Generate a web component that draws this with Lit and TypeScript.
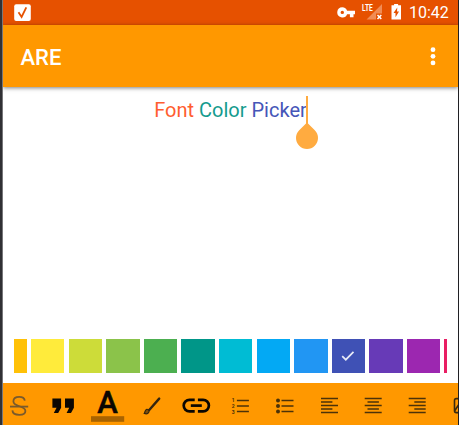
import { LitElement, html, svg, css } from "lit";
import { customElement, state } from "lit/decorators.js";

const COLORS = [
  "#ffc107", "#ffeb3b", "#cddc39", "#8bc34a", "#4caf50", "#009688",
  "#00bcd4", "#03a9f4", "#2196f3", "#3f51b5", "#673ab7", "#9c27b0", "#e91e63",
];

const alignRows = (starts: number[]) =>
  [15.5, 19, 22.5, 26, 29.5].map((y, i) =>
    svg`<path d=${`M${starts[i]} ${y}h${i % 2 ? 11.4 : 17}`} stroke="#4b3209" stroke-width="1.5"/>`);

const TOOLS: Array<[string, unknown]> = [
  ["Strikethrough", svg`<g fill="none" stroke="#7a5a2c" stroke-width="1.8">
    <path d="M27.8 17.6C27.4 15 25.4 13.9 22.2 13.9C18.7 13.9 16.4 15.6 16.4 18.3C16.4 21 18.4 22 21.8 23C26 24.2 28.4 25.2 28.4 28C28.4 30.700 25.8 31.800 22.300 31.800C18.200 31.800 15.600 30.400 15.400 27.400"/>
    <path d="M13 23.600h18.200"/></g>`],
  ["Quote", svg`<path d="M12.800 30h4.400l2.900-5.200V15.400H11.400v9.400h4.200zM25.600 30h4.400l2.900-5.200V15.400H24v9.400h4.200z" fill="#0b0702"/>`],
  ["Font color", svg`<text x="22.600" y="29.800" class="letter">A</text><rect x="6" y="33.200" width="33.200" height="5.600" fill="#a86300"/>`],
  ["Background brush", svg`<path d="M19 27.200L29.200 15.600" stroke="#33250f" stroke-width="2.400" stroke-linecap="round"/>
    <path d="M14.300 30.400C15 29.400 14.600 27.900 16.200 26.600C17.500 25.600 19.700 27.200 18.900 28.900C18 30.700 15.800 31 14.300 30.400Z" fill="#80500a" stroke="#33250f" stroke-width="1.200"/>`],
  ["Link", svg`<g fill="none" stroke="#0b0702" stroke-width="2.700"><path d="M20.700 16.800H15.500a5.800 5.800 0 0 0 0 11.600H20.700M23.900 16.800H29.100a5.800 5.800 0 0 1 0 11.600H23.900"/><path d="M16.800 22.600h11" stroke-width="2.700"/></g>`],
  ["Numbered list", svg`<path d="M18.900 17.500h12M18.900 23h12M18.900 28.500h12" stroke="#4b3209" stroke-width="1.500"/>
    <g class="digits"><text x="13.800" y="18.800">1</text><text x="13.800" y="25">2</text><text x="13.800" y="31.200">3</text></g>`],
  ["Bulleted list", svg`<path d="M18.500 17.500h12M18.500 23h12M18.500 28.500h12" stroke="#4b3209" stroke-width="1.500"/>
    <g fill="#4b3209"><circle cx="15" cy="17.500" r="2"/><circle cx="15" cy="23" r="2"/><circle cx="15" cy="28.500" r="2"/></g>`],
  ["Align left", alignRows([14, 14, 14, 14, 14])],
  ["Align center", alignRows([13.7, 16.5, 13.7, 16.5, 13.7])],
  ["Align right", alignRows([13.7, 19.3, 13.7, 19.3, 13.7])],
  ["Image", svg`<g fill="none" stroke="#3b2a0e" stroke-width="1.600"><rect x="14.500" y="15.600" width="18" height="14" rx="1.800"/><path d="M14.500 28l4-6 4 5 4-3 5 5"/></g>`],
];

@customElement("app-root")
export class AppRoot extends LitElement {
  @state() private selected = 9;

  static styles = css`
    :host {
      display: flex;
      flex-direction: column;
      box-sizing: border-box;
      width: 459px;
      height: 425px;
      overflow: hidden;
      border-left: 2px solid #303034;
      border-right: 1px solid #202024;
      background: #fff;
      font-family: Roboto, "Liberation Sans", sans-serif;
    }
    .screen {
      display: flex;
      flex-direction: column;
      flex: 1;
      min-height: 0;
      border-left: 1px solid #77777a;
      overflow: hidden;
    }
    .status {
      display: flex;
      align-items: center;
      flex: none;
      height: 25px;
      background: #e65100;
      color: #fff;
    }
    .status svg { display: block; flex: none; }
    .check { margin-left: 11px; }
    .spring { flex: 1; }
    .clock { width: 40px; margin: 1px 9px 0 8px; font-size: 16px; line-height: 24px; white-space: nowrap; }
    .appbar {
      display: flex;
      align-items: center;
      justify-content: space-between;
      flex: none;
      height: 62px;
      box-sizing: border-box;
      padding: 2px 17px 0 17.500px;
      background: #ff9800;
      box-shadow: 0 1px 4px rgba(0, 0, 0, 0.5);
      z-index: 1;
    }
    .title { color: #fff; font-size: 22px; font-weight: 500; }
    .editor { flex: 1; display: flex; justify-content: center; padding-top: 9px; }
    .line { position: relative; height: 28px; font-size: 20px; line-height: 28px; white-space: pre; }
    .red { color: #ff5d2f; }
    .teal { color: #159b8e; }
    .indigo { color: #4656b8; }
    .caret { position: absolute; right: -1px; top: 0; width: 2px; height: 28px; background: #ffab40; }
    .handle { position: absolute; right: -11px; top: 26px; }
    .palette {
      display: flex;
      gap: 4.200px;
      flex: none;
      height: 33.500px;
      width: 433.500px;
      margin: 0 0 10.500px 10.500px;
      overflow: hidden;
    }
    .swatch {
      display: grid;
      place-items: center;
      flex: none;
      width: 33.400px;
      height: 33.500px;
      padding: 0;
      border: 0;
    }
    .swatch:first-child { width: 13.400px; }
    .tools { display: flex; flex: none; height: 42px; background: #ff9800; }
    .tool { flex: none; width: 44.280px; height: 42px; padding: 0; border: 0; background: none; }
    .tool:first-child { margin-left: -6.100px; }
    .tool svg { display: block; }
    .letter { font: 500 31px Roboto, sans-serif; text-anchor: middle; fill: #0b0702; stroke: #0b0702; stroke-width: 0.500px; }
    .digits { font: 700 5px Roboto, sans-serif; fill: #4b3209; }
  `;

  render() {
    return html`
      <div class="screen">
        <div class="status">
          <svg class="check" width="18" height="18" viewBox="0 0 18 18">
            <rect x="0.200" y="0.200" width="16.600" height="16.800" rx="2" fill="#fff"/>
            <path d="M4.500 8.300L7.600 13L12.300 3.300" fill="none" stroke="#e65100" stroke-width="1.800"/>
          </svg>
          <span class="spring"></span>
          <svg width="64" height="25" viewBox="337 0 64 25">
            <path fill="#fff" fill-rule="evenodd" d="M342.300 7.200a5.100 5.100 0 0 1 4.800 3.500H355v3.500h-1.500v3.100h-3.600v-3.100h-2.800a5.100 5.100 0 1 1-4.800-7zM342.300 10.700a1.700 1.700 0 1 0 0 3.400a1.700 1.700 0 0 0 0-3.400z"/>
            <text x="362" y="11" font-size="9" font-weight="700" textLength="10.800" lengthAdjust="spacingAndGlyphs" fill="#fff">LTE</text>
            <path d="M382 4v9.500h-6V19.500H366.500z" fill="#f08c55"/>
            <path d="M377.500 15l3.800 4M381.300 15l-3.800 4" stroke="#fff" stroke-width="1.500"/>
            <path fill="#fff" d="M391.500 5.300h2.600V4h4v1.300h2.900v14.200H391.500V5.300z"/>
            <path fill="#e65100" d="M397.300 7.500l-3.800 5.500h2v4.300l3.500-5.700h-2z"/>
          </svg>
          <span class="clock">10:42</span>
        </div>
        <div class="appbar">
          <span class="title">ARE</span>
          <svg width="16" height="22" viewBox="0 0 16 22" fill="#fff">
            <circle cx="8" cy="3.700" r="2.400"/><circle cx="8" cy="10.300" r="2.400"/><circle cx="8" cy="16.900" r="2.400"/>
          </svg>
        </div>
        <div class="editor">
          <div class="line"><span class="red">Font</span> <span class="teal">Color</span> <span class="indigo">Picker</span><span class="caret"></span><svg class="handle" width="22" height="28" viewBox="0 0 22 28"><path d="M11 0.500L18.800 8.200A11 11 0 1 1 3.200 8.200Z" fill="#ffab40"/></svg></div>
        </div>
        <div class="palette">
          ${COLORS.map((c, i) => html`
            <button class="swatch" style="background:${c}" aria-label="Color ${c}" @click=${() => (this.selected = i)}>
              ${i === this.selected ? html`<svg width="14" height="12" viewBox="0 0 14 12"><path d="M1.200 6.200L4.800 9.700L12.500 1.800" fill="none" stroke="#e8eaf6" stroke-width="1.700"/></svg>` : null}
            </button>`)}
        </div>
        <div class="tools">
          ${TOOLS.map(([name, icon]) => html`
            <button class="tool" aria-label=${name}><svg width="44" height="42" viewBox="0 0 44 42">${icon}</svg></button>`)}
        </div>
      </div>`;
  }
}
